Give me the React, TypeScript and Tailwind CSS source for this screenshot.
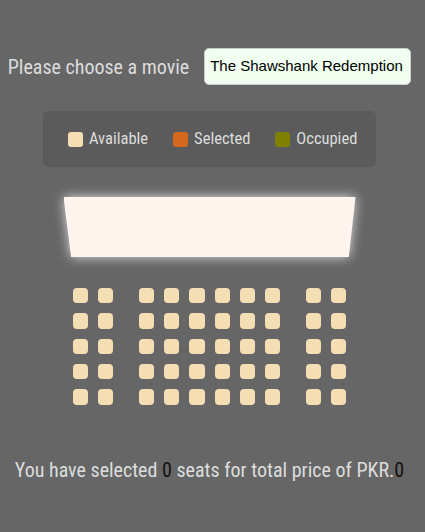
import React from "react";

const rows = [0, 1, 2, 3, 4];
const seats = [0, 1, 2, 3, 4, 5, 6, 7, 8, 9];

const Seat = ({ index }: { index: number }) => {
  let cls = "m-[5px] h-[15.33px] w-[15.33px] rounded-[4px] bg-[#f5deb3]";
  if (index === 1) cls += " mr-[20.33px]";
  if (index === 8) cls += " ml-[20.33px]";
  return <div className={cls} />;
};

const LegendItem = ({ color, label }: { color: string; label: string }) => (
  <li className="flex items-center gap-[6px]">
    <span className={`h-[15px] w-[15px] rounded-[3px] ${color}`} />
    <span className="whitespace-nowrap text-[16.5px] leading-[22px]">{label}</span>
  </li>
);

const App = () => {
  return (
    <div className="min-h-screen bg-[#666666] font-['Roboto',sans-serif] text-[#dddddd] [font-stretch:condensed]">
      <div className="flex flex-col items-center pr-[6px] pt-[48px]">
        <div className="flex items-center">
          <label className="whitespace-nowrap text-[20px] leading-[24px]">Please choose a movie</label>
          <select
            defaultValue="10"
            className="ml-[15px] h-[37px] w-[207px] appearance-none rounded-[5px] border border-[#cccccc] bg-[#f0fff0] px-[5px] font-['Liberation_Sans',Arial,sans-serif] text-[15px] text-black [font-stretch:normal]"
          >
            <option value="10">The Shawshank Redemption</option>
            <option value="12">The Godfather</option>
            <option value="8">The Dark Knight</option>
          </select>
        </div>

        <ul className="mt-[26px] flex h-[56px] w-[333px] items-center gap-[25px] rounded-[5px] bg-[rgba(0,0,0,0.1)] pl-[25px]">
          <LegendItem color="bg-[#f5deb3]" label="Available" />
          <LegendItem color="bg-[#d2691e]" label="Selected" />
          <LegendItem color="bg-[#808000]" label="Occupied" />
        </ul>

        <div className="mt-[30px] h-[60px] w-[292px] drop-shadow-[0_0_6px_rgba(255,255,255,0.8)]">
          <div className="h-full w-full bg-[#fff5ee] [clip-path:polygon(0_0,100%_0,97.7%_100%,2.6%_100%)]" />
        </div>

        <div className="mt-[26px] flex flex-col">
          {rows.map((r) => (
            <div key={r} className="flex">
              {seats.map((s) => (
                <Seat key={s} index={s} />
              ))}
            </div>
          ))}
        </div>

        <p className="mt-[48px] whitespace-nowrap text-[20px] leading-[24px]">
          You have selected <span className="text-[#111111]">0</span> seats for total price of PKR.
          <span className="text-[#111111]">0</span>
        </p>
      </div>
    </div>
  );
};

export default App;
